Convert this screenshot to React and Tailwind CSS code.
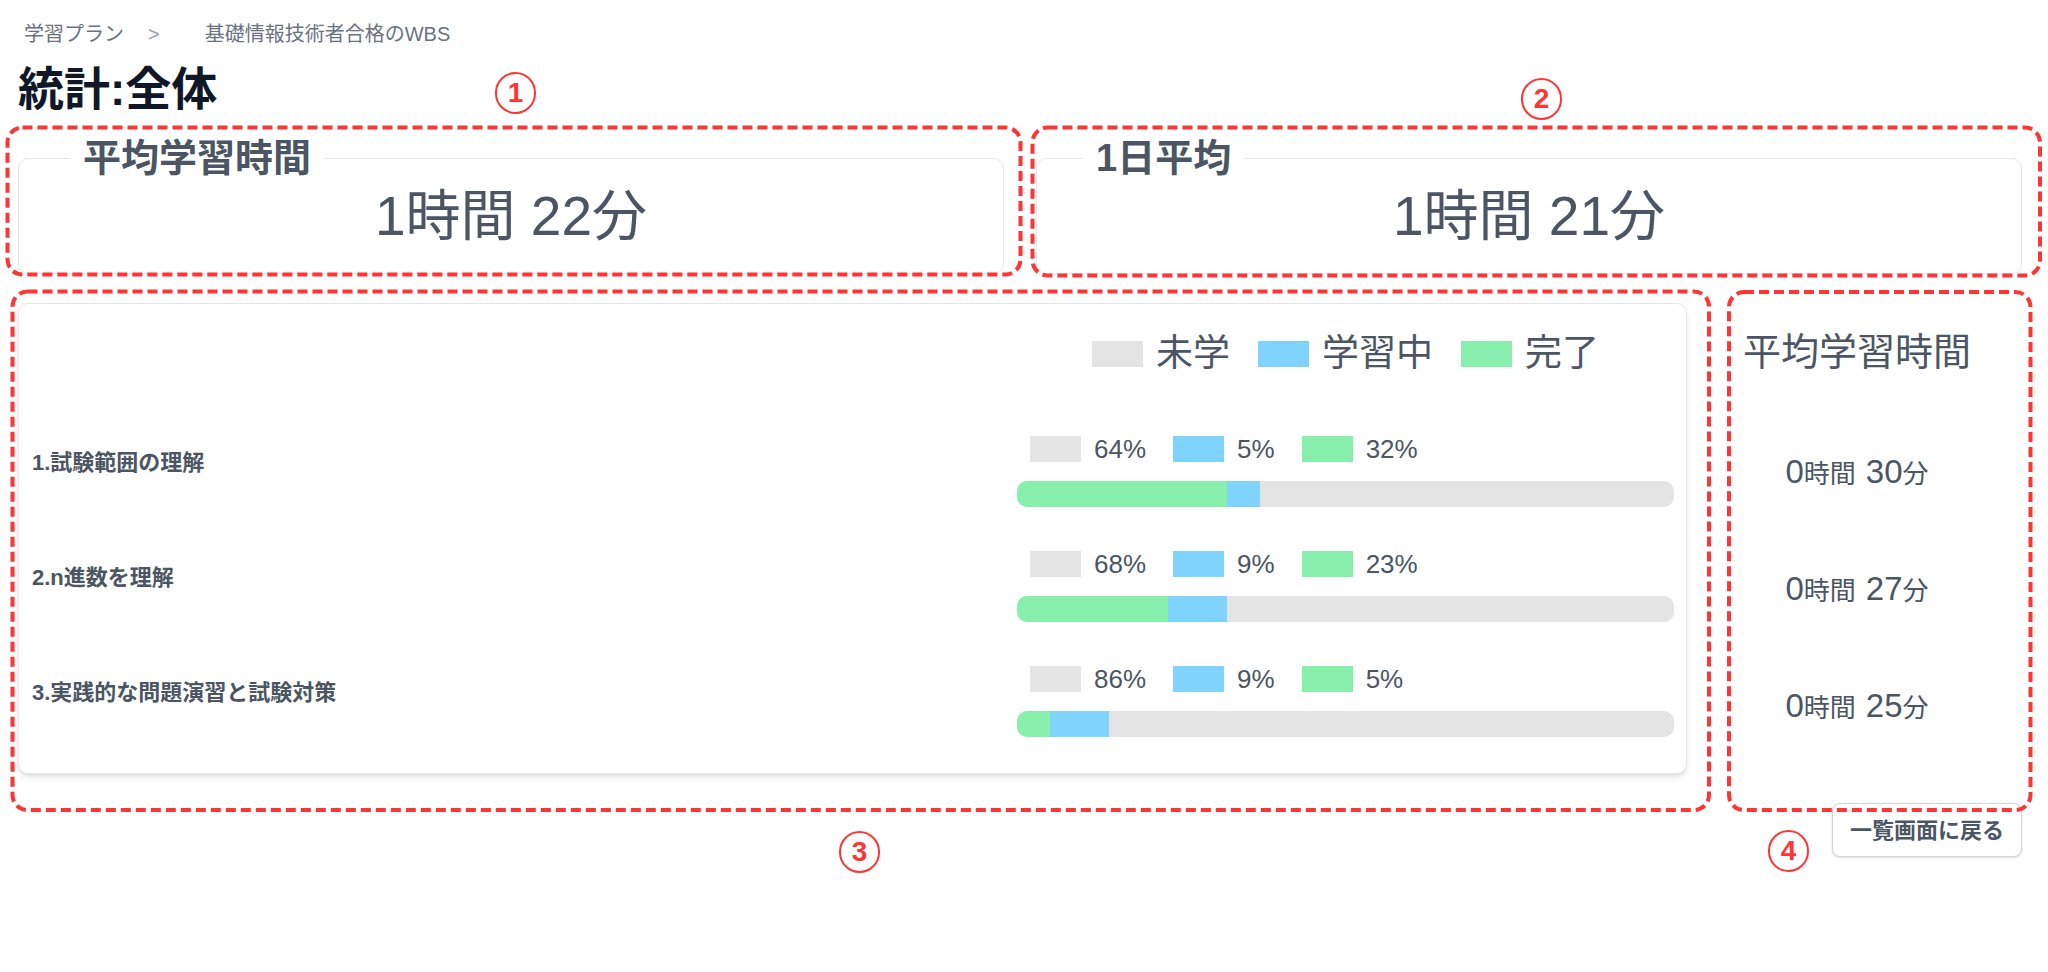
const rows = [
  { label: "1.試験範囲の理解", todo: 64, doing: 5, done: 32 },
  { label: "2.n進数を理解", todo: 68, doing: 9, done: 23 },
  { label: "3.実践的な問題演習と試験対策", todo: 86, doing: 9, done: 5 },
];

const times = [
  { h: 0, m: 30 },
  { h: 0, m: 27 },
  { h: 0, m: 25 },
];

function StatCard({ title, value, legendClass }) {
  return (
    <fieldset className="rounded-[10px] border border-gray-200 bg-white pb-[21px]">
      <legend className={legendClass}>{title}</legend>
      <div className="flex h-[72px] items-center justify-center text-[55px] leading-none">
        {value}
      </div>
    </fieldset>
  );
}

function PercentItem({ color, value, first }) {
  return (
    <div className={first ? "flex items-center" : "ml-[27px] flex items-center"}>
      <span className={`h-[26px] w-[51px] ${color}`} />
      <span className="ml-[13px] text-[26px] leading-none">{value}%</span>
    </div>
  );
}

function ProgressRow({ row }) {
  return (
    <div className="grid grid-cols-[985px_657px] items-center">
      <div className="pb-[18px] text-[22px] font-bold leading-[28px]">{row.label}</div>
      <div>
        <div className="flex h-[26px] items-center pl-[13px]">
          <PercentItem color="bg-[#e4e4e4]" value={row.todo} first />
          <PercentItem color="bg-[#7fd3fc]" value={row.doing} />
          <PercentItem color="bg-[#88efac]" value={row.done} />
        </div>
        <div className="mt-[19px] flex h-[26px] overflow-hidden rounded-[10px] bg-[#e4e4e4]">
          <div className="h-full bg-[#88efac]" style={{ width: `${row.done}%` }} />
          <div className="h-full bg-[#7fd3fc]" style={{ width: `${row.doing}%` }} />
        </div>
      </div>
    </div>
  );
}

function LegendItem({ color, text, first }) {
  return (
    <div className={first ? "flex items-center" : "ml-[28px] flex items-center"}>
      <span className={`h-[26px] w-[51px] ${color}`} />
      <span className="ml-[13px] text-[37px] leading-[44px]">{text}</span>
    </div>
  );
}

function Circled({ n, pos }) {
  return (
    <div
      className={`pointer-events-none absolute flex h-[42px] w-[41px] items-center justify-center rounded-full border-2 border-[#ff3535] text-[28px] font-semibold leading-none text-[#ff3535] ${pos}`}
    >
      {n}
    </div>
  );
}

export default function App() {
  return (
    <div className="relative min-h-screen bg-white font-['Liberation_Sans','Noto_Sans_CJK_JP',sans-serif] text-[#4b5563]">
      <div className="pl-[18px] pr-[26px] pt-[20px]">
        <nav className="flex h-[28px] items-center pl-[6px] text-[20px] leading-[28px] text-gray-500">
          <span>学習プラン</span>
          <span className="ml-[24px] text-gray-400">&gt;</span>
          <span className="ml-[45px]">基礎情報技術者合格のWBS</span>
        </nav>

        <h1 className="mt-[15px] text-[46px] font-bold leading-[53px] text-gray-900">
          統計:全体
        </h1>

        <div className="mt-[20px] grid grid-cols-2 gap-8">
          <StatCard
            title="平均学習時間"
            value="1時間 22分"
            legendClass="ml-[51px] px-[13px] text-[38px] font-bold leading-[44px]"
          />
          <StatCard
            title="1日平均"
            value="1時間 21分"
            legendClass="ml-[46px] px-[13px] text-[38px] font-bold leading-[44px]"
          />
        </div>

        <div className="mt-[29px] flex items-start">
          <div className="w-[1669px] rounded-[10px] border border-gray-200 bg-white pb-[36px] pl-[13px] pr-[12px] pt-[28px] shadow-md">
            <div className="grid grid-cols-[985px_657px]">
              <div />
              <div className="flex h-[44px] items-center justify-center">
                <LegendItem color="bg-[#e4e4e4]" text="未学" first />
                <LegendItem color="bg-[#7fd3fc]" text="学習中" />
                <LegendItem color="bg-[#88efac]" text="完了" />
              </div>
            </div>
            <div className="mt-[60px] flex flex-col gap-[44px]">
              {rows.map((row) => (
                <ProgressRow key={row.label} row={row} />
              ))}
            </div>
          </div>

          <div className="ml-[56px] flex flex-col items-center pt-[27px]">
            <div className="text-[38px] leading-[44px]">平均学習時間</div>
            <div className="mt-[73px] flex flex-col gap-[79px]">
              {times.map((t, i) => (
                <div key={i} className="flex h-[38px] items-baseline justify-center">
                  <span className="text-[33px]">{t.h}</span>
                  <span className="text-[26px]">時間</span>
                  <span className="ml-[10px] text-[33px]">{t.m}</span>
                  <span className="text-[26px]">分</span>
                </div>
              ))}
            </div>
          </div>
        </div>

        <div className="mt-[29px] flex justify-end">
          <button className="h-[54px] rounded-[8px] border border-gray-300 bg-white px-[17px] text-[22px] font-bold text-gray-600 shadow-sm">
            一覧画面に戻る
          </button>
        </div>
      </div>

      {/* red annotation layer */}
      <svg
        className="pointer-events-none absolute left-0 top-0"
        width="2048"
        height="972"
        fill="none"
        stroke="#ff3535"
        strokeWidth="4"
        strokeDasharray="10 5"
      >
        <rect x="7.5" y="127.5" width="1013" height="147" rx="15" />
        <rect x="1032.5" y="127.5" width="1007.5" height="148" rx="15" />
        <rect x="12.5" y="291.5" width="1696.5" height="518.5" rx="15" />
        <rect x="1729" y="292" width="301.5" height="518" rx="15" />
      </svg>
      <Circled n="1" pos="left-[495px] top-[72px]" />
      <Circled n="2" pos="left-[1521px] top-[78px]" />
      <Circled n="3" pos="left-[839px] top-[831px]" />
      <Circled n="4" pos="left-[1768px] top-[830px]" />
    </div>
  );
}
